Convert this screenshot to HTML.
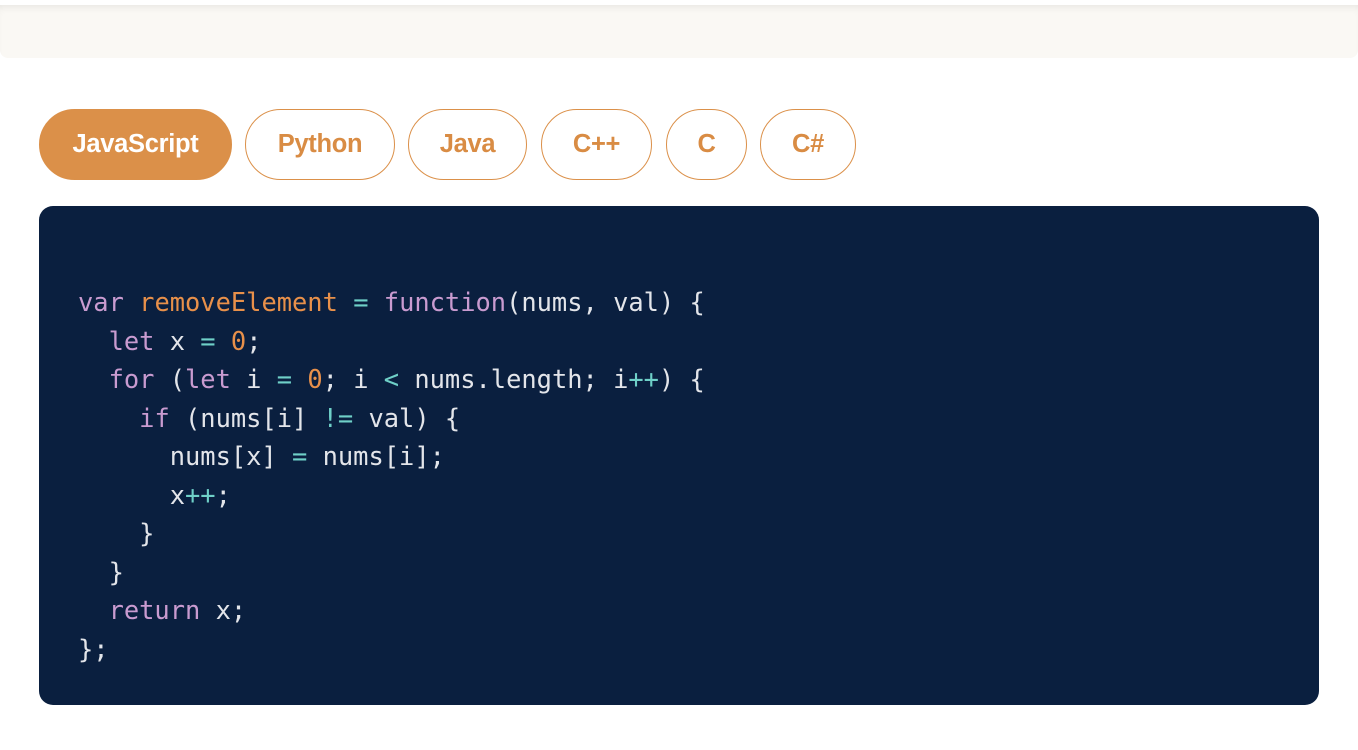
<!DOCTYPE html>
<html><head><style>
body{margin:0;width:1358px;height:750px;background:#fff;position:relative;overflow:hidden;font-family:"Liberation Sans",sans-serif}
.top{position:absolute;left:0;top:5px;width:1358px;height:53px;background:#faf8f4;border-radius:0 0 8px 8px;box-shadow:inset 0 6px 8px -4px rgba(0,0,0,0.08)}
.b{position:absolute;top:109px;height:71px;box-sizing:border-box;border:1px solid #db9049;border-radius:36px;color:#d98c44;font-weight:bold;font-size:25.5px;display:flex;align-items:center;justify-content:center;background:#fff;letter-spacing:-0.3px}
.b.a{background:#db9049;color:#fff}
.code{position:absolute;left:39px;top:206px;width:1280px;height:499px;background:#0a1f3f;border-radius:14px}
pre{margin:0;position:absolute;left:78px;top:283px;font-family:"DejaVu Sans Mono","Liberation Mono",monospace;font-size:25.4px;line-height:38.5px;color:#e3e5ea}
.k{color:#c99bd0}.f{color:#e8904a}.o{color:#6fd0c8}
</style></head><body>
<div class="top"></div>
<div class="b a" style="left:39px;width:193px">JavaScript</div>
<div class="b" style="left:245px;width:150px">Python</div>
<div class="b" style="left:408px;width:119px">Java</div>
<div class="b" style="left:541px;width:111px">C++</div>
<div class="b" style="left:666px;width:81px">C</div>
<div class="b" style="left:760px;width:96px">C#</div>
<div class="code"></div>
<pre><span class="k">var</span> <span class="f">removeElement</span> <span class="o">=</span> <span class="k">function</span>(nums, val) {
  <span class="k">let</span> x <span class="o">=</span> <span class="f">0</span>;
  <span class="k">for</span> (<span class="k">let</span> i <span class="o">=</span> <span class="f">0</span>; i <span class="o">&lt;</span> nums.length; i<span class="o">++</span>) {
    <span class="k">if</span> (nums[i] <span class="o">!=</span> val) {
      nums[x] <span class="o">=</span> nums[i];
      x<span class="o">++</span>;
    }
  }
  <span class="k">return</span> x;
};</pre>
</body></html>
